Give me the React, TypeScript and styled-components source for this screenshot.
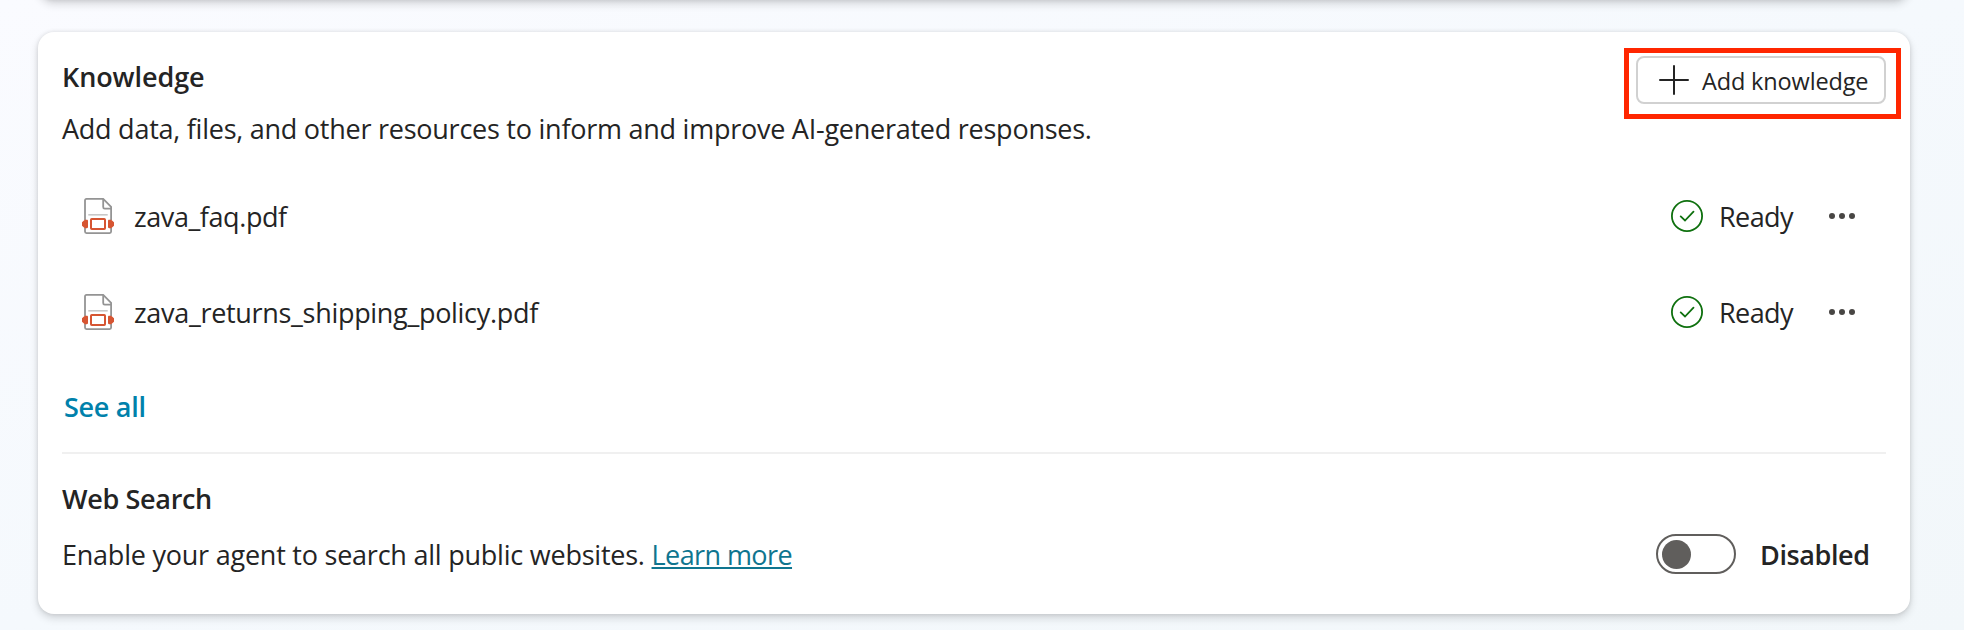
import React from "react";
import styled, { createGlobalStyle } from "styled-components";

const GlobalStyle = createGlobalStyle`
  *, *::before, *::after { box-sizing: border-box; }
  body {
    margin: 0;
    font-family: "Open Sans", "Noto Sans", sans-serif;
    font-size: 27px;
    line-height: 40px;
    color: #242424;
  }
`;

const Page = styled.main`
  display: flex;
  flex-direction: column;
  height: 630px;
  padding: 0 54px 0 38px;
  overflow: hidden;
  background: linear-gradient(to bottom right, #fafbff 0%, #f5f9fd 50%, #f2f7fa 100%);
`;

const Card = styled.section`
  flex: none;
  border-radius: 16px;
  background: #fff;
  box-shadow: 0 0 4px rgba(0, 0, 0, 0.1), 0 4px 8px rgba(0, 0, 0, 0.15);
`;

const PreviousCard = styled(Card)`
  height: 40px;
  margin-top: -40px;
`;

const KnowledgeCard = styled(Card)`
  display: flex;
  flex-direction: column;
  height: 582px;
  margin-top: 32px;
  padding: 24px 24px 0;
`;

const Header = styled.header`
  display: flex;
  justify-content: space-between;
  align-items: flex-start;
  height: 112px;
`;

const Intro = styled.div`
  display: flex;
  flex-direction: column;
  gap: 12px;
  padding-top: 1px;
`;

const Title = styled.h2<{ $tracking: number }>`
  margin: 0;
  font-size: 27px;
  font-weight: 600;
  letter-spacing: ${(p) => p.$tracking}px;
`;

const Description = styled.p<{ $tracking: number }>`
  margin: 0;
  white-space: nowrap;
  letter-spacing: ${(p) => p.$tracking}px;
`;

const Highlight = styled.div`
  position: relative;
  &::after {
    content: "";
    position: absolute;
    inset: -8px -15px -15px -12px;
    border: 5px solid #ff2600;
    pointer-events: none;
  }
`;

const AddButton = styled.button`
  display: flex;
  align-items: center;
  gap: 12px;
  width: 250px;
  height: 48px;
  padding: 0 0 0 20px;
  border: 2px solid #d1d1d1;
  border-radius: 8px;
  background: #fff;
  color: #242424;
  font: 400 23.5px/32px "Open Sans", "Noto Sans", sans-serif;
  letter-spacing: -0.15px;
  white-space: nowrap;
`;

const ButtonLabel = styled.span`
  padding-top: 2px;
`;

const FileList = styled.ul`
  margin: 0;
  padding: 0;
  list-style: none;
`;

const FileRow = styled.li`
  display: flex;
  align-items: center;
  height: 96px;
  padding: 0 30.5px 0 20px;
`;

const FileName = styled.span<{ $tracking: number }>`
  flex: 1;
  margin-left: 20px;
  padding-top: 2px;
  letter-spacing: ${(p) => p.$tracking}px;
`;

const Status = styled.span`
  display: flex;
  align-items: center;
  gap: 16px;
  width: 157.5px;
  letter-spacing: -0.6px;
`;

const StatusLabel = styled.span`
  padding-top: 2px;
`;

const MoreButton = styled.button`
  display: flex;
  padding: 0;
  border: 0;
  background: none;
`;

const SeeAll = styled.a`
  align-self: flex-start;
  margin: 27px 0 0 2px;
  color: #0081ab;
  font-weight: 600;
  letter-spacing: -0.28px;
`;

const Divider = styled.hr`
  width: 100%;
  height: 2px;
  margin: 25px 0;
  border: 0;
  background: #f0f0f0;
`;

const WebSearchRow = styled.div`
  display: flex;
  align-items: center;
  justify-content: space-between;
  height: 40px;
  margin-top: 15px;
`;

const LearnMore = styled.a`
  color: #0f758f;
  letter-spacing: -0.58px;
  text-decoration: underline;
  text-decoration-thickness: 2px;
  text-underline-offset: 2px;
  text-decoration-skip-ink: none;
`;

const WebSearchText = styled(Description)`
  padding-top: 2px;
`;

const ToggleField = styled.div`
  display: flex;
  align-items: center;
  gap: 24px;
  width: 230px;
  font-weight: 600;
  letter-spacing: -0.4px;
`;

const ToggleLabel = styled.span`
  padding-top: 2px;
`;

const Toggle = styled.button`
  display: flex;
  align-items: center;
  width: 80px;
  height: 40px;
  padding: 0 0 0 3.5px;
  border: 2px solid #605e5c;
  border-radius: 20px;
  background: #fff;
`;

const Knob = styled.span`
  width: 29px;
  height: 29px;
  border-radius: 50%;
  background: #605e5c;
`;

const PlusIcon = () => (
  <svg width="32" height="32" viewBox="0 0 32 32" fill="none" stroke="#242424" strokeWidth="2" strokeLinecap="round">
    <path d="M16 2V30M2 16H30" />
  </svg>
);

const PdfIcon = () => (
  <svg width="32" height="36" viewBox="0 0 32 36" fill="none">
    <path
      d="M3 22V2.4C3 1.5 3.6 .9 4.5 .9H21.2L29.1 8.8V22M3 29.5V33.6C3 34.5 3.6 35.1 4.5 35.1H27.6C28.5 35.1 29.1 34.5 29.1 33.6V29.5"
      stroke="#949494"
      strokeWidth="1.8"
    />
    <path d="M21.2 1V9C21.2 10 21.8 10.6 22.7 10.6H29" stroke="#949494" strokeWidth="1.8" />
    <path d="M6.3 16.8H25.7" stroke="#c8c8c8" strokeWidth="1.6" />
    <rect x="9" y="21" width="14" height="10" rx="0.8" stroke="#d65532" strokeWidth="2" />
    <path
      d="M4.8 21.8H2.8L0 24.2V27.8L2.8 30.2H4.8C5.6 30.2 6 29.7 6 29V23C6 22.3 5.6 21.8 4.8 21.8ZM27.2 21.8H29.2L32 24.2V27.8L29.2 30.2H27.2C26.4 30.2 26 29.7 26 29V23C26 22.3 26.4 21.8 27.2 21.8Z"
      fill="#d65532"
    />
  </svg>
);

const ReadyIcon = () => (
  <svg width="32" height="32" viewBox="0 0 32 32" fill="none" stroke="#0e700e">
    <circle cx="16" cy="16" r="15.1" strokeWidth="1.8" />
    <path d="M9.7 16.4L14 20.5L22.5 11.6" strokeWidth="1.8" strokeLinecap="round" />
  </svg>
);

const MoreIcon = () => (
  <svg width="27" height="8" viewBox="0 0 27 8" fill="#484644">
    <circle cx="3" cy="4" r="3" />
    <circle cx="13" cy="4" r="3" />
    <circle cx="23" cy="4" r="3" />
  </svg>
);

const files = [
  { name: "zava_faq.pdf", tracking: -0.42 },
  { name: "zava_returns_shipping_policy.pdf", tracking: -0.31 },
];

export default function App() {
  return (
    <>
      <GlobalStyle />
      <Page>
        <PreviousCard />
        <KnowledgeCard>
          <Header>
            <Intro>
              <Title $tracking={-0.09}>Knowledge</Title>
              <Description $tracking={-0.25}>
                Add data, files, and other resources to inform and improve AI-generated responses.
              </Description>
            </Intro>
            <Highlight>
              <AddButton>
                <PlusIcon />
                <ButtonLabel>Add knowledge</ButtonLabel>
              </AddButton>
            </Highlight>
          </Header>
          <FileList>
            {files.map((file) => (
              <FileRow key={file.name}>
                <PdfIcon />
                <FileName $tracking={file.tracking}>{file.name}</FileName>
                <Status>
                  <ReadyIcon />
                  <StatusLabel>Ready</StatusLabel>
                </Status>
                <MoreButton aria-label="More options">
                  <MoreIcon />
                </MoreButton>
              </FileRow>
            ))}
          </FileList>
          <SeeAll>See all</SeeAll>
          <Divider />
          <Title $tracking={-0.33}>Web Search</Title>
          <WebSearchRow>
            <WebSearchText $tracking={-0.23}>
              Enable your agent to search all public websites. <LearnMore>Learn more</LearnMore>
            </WebSearchText>
            <ToggleField>
              <Toggle role="switch" aria-checked="false" aria-label="Web Search">
                <Knob />
              </Toggle>
              <ToggleLabel>Disabled</ToggleLabel>
            </ToggleField>
          </WebSearchRow>
        </KnowledgeCard>
      </Page>
    </>
  );
}
